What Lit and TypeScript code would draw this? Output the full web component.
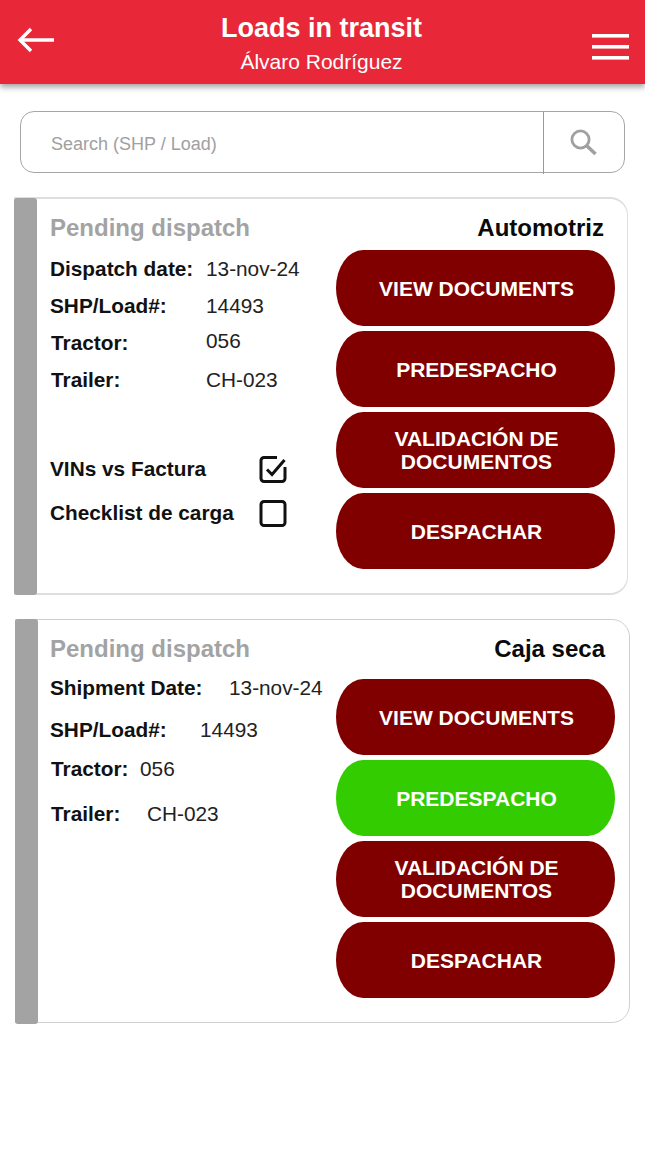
import { LitElement, html, css, svg } from "lit";
import { customElement } from "lit/decorators.js";

const back = html`<svg class="back" width="38" height="26" viewBox="0 0 38 26" fill="none" stroke="#fff" stroke-width="3.4"><path d="M3 13H37"/><path d="M14 2L3 13L14 24"/></svg>`;
const burger = html`<svg class="burger" width="38" height="26" viewBox="0 0 38 26" fill="#fff"><rect x="0" y="0" width="37" height="3.6"/><rect x="0" y="11" width="37" height="3.6"/><rect x="0" y="22" width="37" height="3.6"/></svg>`;
const search = html`<svg width="28" height="28" viewBox="0 0 28 28" fill="none" stroke="#a0a0a0"><circle cx="11.5" cy="11.5" r="8.6" stroke-width="2.8"/><path d="M17.5 17.5L26.5 26" stroke-width="3.6"/></svg>`;
const box = svg`<rect x="2" y="2.5" width="24" height="24" rx="3" fill="none" stroke="#111" stroke-width="3"/>`;
const unchecked = html`<svg width="28" height="28" viewBox="0 0 28 28">${box}</svg>`;
const checked = html`<svg width="28" height="28" viewBox="0 0 28 28"><path d="M26 12V23.5a3 3 0 0 1-3 3H5a3 3 0 0 1-3-3V5.5a3 3 0 0 1 3-3H18" fill="none" stroke="#111" stroke-width="3"/><path d="M8 14.5L13 19.5L25.5 5" fill="none" stroke="#111" stroke-width="3"/></svg>`;

@customElement("app-root")
export class AppRoot extends LitElement {
  static styles = css`
    :host { display: block; width: 645px; height: 1155px; background: #fff; font-family: "Liberation Sans", Arial, sans-serif; color: #111; overflow: hidden; }
    * { box-sizing: border-box; }
    .bar { height: 84px; background: #e82738; box-shadow: 0 3px 6px rgba(0,0,0,.38); color: #fff; display: grid; grid-template-columns: 1fr auto 1fr; position: relative; }
    .back { margin: 27px 0 0 17px; }
    .burger { margin: 34px 15px 0 auto; }
    .titles { text-align: center; padding: 13px 2px 0 0; }
    .title { font-size: 27px; font-weight: 700; line-height: 31px; }
    .user { font-size: 21px; line-height: 26px; margin-top: 5px; }
    .search { margin: 27px 20px 0; height: 62px; border: 1px solid #a6a6a6; border-radius: 14px; display: flex; align-items: flex-start; }
    .ph { flex: 1; padding: 22px 0 0 30px; font-size: 18px; color: #a0a0a0; }
    .sbtn { width: 81px; height: 62px; border-left: 1px solid #999; display: flex; align-items: center; padding-left: 25px; padding-bottom: 2px; }
    .card { position: relative; border: 1px solid #dedede; border-radius: 0 18px 18px 0; width: 614px; display: flex; }
    .c1 { margin: 24px 0 0 14px; height: 398px; border-top-width: 2px; border-bottom-width: 2px; }
    .c2 { margin: 24px 0 0 15px; height: 404px; width: 615px; border-color: #cfcfcf; }
    .stripe { position: absolute; left: -1px; top: -1px; bottom: -2px; width: 22.5px; background: #a3a3a3; border-radius: 3px; }
    .body { flex: 1; display: flex; }
    .c1 .body { padding-left: 35px; }
    .c2 .body { padding-left: 34px; }
    .left { width: 286px; font-size: 20.8px; }
    .status { font-size: 24px; font-weight: 700; color: #a3a3a3; line-height: 28px; margin-top: 15px; }
    .row { display: flex; line-height: 24px; white-space: nowrap; }
    .k { font-weight: 700; }
    .v { color: #222; }
    .c1 .row { margin-top: 13px; }
    .c1 .row.first { margin-top: 15px; }
    .c1 .k { width: 156px; }
    .c1 .nudge { margin-top: 12px; }
    .c1 .nudge .k { margin-left: 1px; width: 155px; padding-top: 1px; }
    .c1 .nudge .v { margin-top: -1px; }
    .c1 .last { margin-top: 13px; }
    .c1 .last .k { margin-left: 1px; width: 155px; }
    .c2 .first { margin-top: 13px; }
    .c2 .first .k { width: 179px; }
    .c2 .second { margin-top: 18px; }
    .c2 .second .k { width: 150px; }
    .c2 .third { margin-top: 15px; }
    .c2 .third .k { width: 89px; margin-left: 1px; }
    .c2 .fourth { margin-top: 21px; }
    .c2 .fourth .k { width: 96px; margin-left: 1px; }
    .checks { margin-top: 63px; }
    .check { display: flex; align-items: center; height: 28px; }
    .check + .check { margin-top: 16px; }
    .check .k { width: 209px; }
    .right { width: 279px; position: relative; display: flex; flex-direction: column; gap: 5px; }
    .c1 .right { padding-top: 51px; }
    .c2 .right { padding-top: 59px; }
    .kind { position: absolute; right: 11px; font-size: 24px; font-weight: 700; line-height: 28px; color: #0a0a0a; white-space: nowrap; }
    .c1 .kind { top: 15px; }
    .c2 .kind { top: 15px; right: 10px; }
    .btn { height: 76px; padding-left: 2px; border-radius: 27px / 38px; background: #800000; color: #fff; font-weight: 700; font-size: 21px; line-height: 23px; display: flex; align-items: center; justify-content: center; text-align: center; }
    .green { background: #33cc00; }
  `;

  private buttons(green: boolean) {
    return html`
      <div class="btn">VIEW DOCUMENTS</div>
      <div class="btn ${green ? "green" : ""}">PREDESPACHO</div>
      <div class="btn">VALIDACIÓN DE<br />DOCUMENTOS</div>
      <div class="btn">DESPACHAR</div>`;
  }

  render() {
    return html`
      <div class="bar">
        ${back}
        <div class="titles"><div class="title">Loads in transit</div><div class="user">Álvaro Rodríguez</div></div>
        ${burger}
      </div>
      <div class="search"><div class="ph">Search (SHP / Load)</div><div class="sbtn">${search}</div></div>

      <div class="card c1">
        <div class="stripe"></div>
        <div class="body">
          <div class="left">
            <div class="status">Pending dispatch</div>
            <div class="row first"><span class="k">Dispatch date:</span><span class="v">13-nov-24</span></div>
            <div class="row"><span class="k">SHP/Load#:</span><span class="v">14493</span></div>
            <div class="row nudge"><span class="k">Tractor:</span><span class="v">056</span></div>
            <div class="row last"><span class="k">Trailer:</span><span class="v">CH-023</span></div>
            <div class="checks">
              <div class="check"><span class="k">VINs vs Factura</span>${checked}</div>
              <div class="check"><span class="k">Checklist de carga</span>${unchecked}</div>
            </div>
          </div>
          <div class="right"><div class="kind">Automotriz</div>${this.buttons(false)}</div>
        </div>
      </div>

      <div class="card c2">
        <div class="stripe"></div>
        <div class="body">
          <div class="left">
            <div class="status">Pending dispatch</div>
            <div class="row first"><span class="k">Shipment Date:</span><span class="v">13-nov-24</span></div>
            <div class="row second"><span class="k">SHP/Load#:</span><span class="v">14493</span></div>
            <div class="row third"><span class="k">Tractor:</span><span class="v">056</span></div>
            <div class="row fourth"><span class="k">Trailer:</span><span class="v">CH-023</span></div>
          </div>
          <div class="right"><div class="kind">Caja seca</div>${this.buttons(true)}</div>
        </div>
      </div>
    `;
  }
}
